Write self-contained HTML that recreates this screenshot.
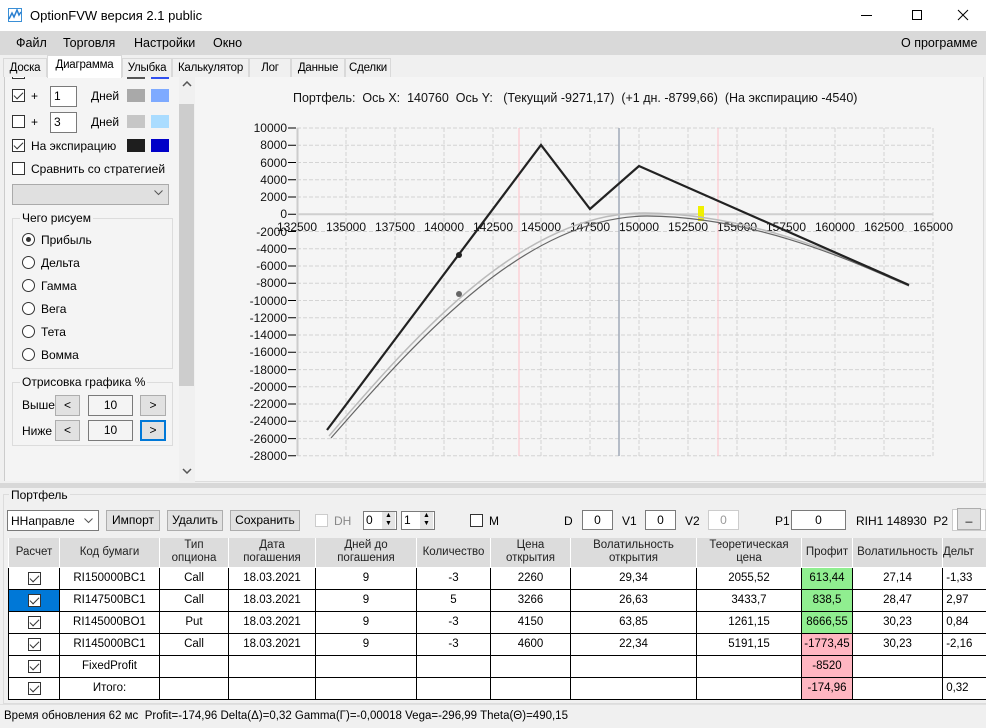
<!DOCTYPE html>
<html><head><meta charset="utf-8"><style>
*{box-sizing:border-box;margin:0;padding:0}
body{width:986px;height:728px;overflow:hidden;background:#f0f0f0;font-family:"Liberation Sans",sans-serif;font-size:12px;color:#000;position:relative}
.a{position:absolute;white-space:nowrap}
.cb{position:absolute;width:13px;height:13px;border:1px solid #333;background:#fff}
.cb.c::after{content:"";position:absolute;left:3px;top:0px;width:4px;height:8px;border:solid #333;border-width:0 1.5px 1.5px 0;transform:rotate(45deg)}
.rb{position:absolute;width:13px;height:13px;border:1px solid #333;border-radius:50%;background:#fff}
.rb.c::after{content:"";position:absolute;left:3px;top:3px;width:5px;height:5px;border-radius:50%;background:#333}
.tb{position:absolute;border:1px solid #7a7a7a;background:#fff;text-align:center;line-height:18px}
.bt{position:absolute;border:1px solid #adadad;background:#e1e1e1;text-align:center;line-height:19px}
.tab{position:absolute;z-index:3;top:58px;height:19px;border:1px solid #d9d9d9;border-bottom:none;background:#f0f0f0;text-align:center;line-height:18px;font-size:11.5px;letter-spacing:-0.2px}
table{border-collapse:collapse;position:absolute;left:8px;top:538px;table-layout:fixed;width:984px;font-size:11.5px}
td{border:1px solid #000;text-align:center;height:22px;background:#fff;overflow:hidden;white-space:nowrap}
th{background:#dcdcdc;font-weight:normal;border:1px solid #fff;border-top:none;height:29px;line-height:13px;color:#222;font-size:11.5px;overflow:hidden;white-space:nowrap}
.g{background:#90ee90}.p{background:#ffb6c1}
</style></head><body>
<!-- title bar -->
<div class="a" style="left:0;top:0;width:986px;height:31px;background:#fff"></div>
<svg class="a" style="left:8px;top:8px" width="14" height="14" viewBox="0 0 14 14"><rect x="0.5" y="0.5" width="13" height="13" fill="#fff" stroke="#3a8fd6"/><path d="M1 11 L4 5 L6 9 L9 2 L11 7 L13 4" stroke="#2a7fd0" stroke-width="1.5" fill="none"/></svg>
<div class="a" style="left:30px;top:8px;font-size:13px">OptionFVW версия 2.1 public</div>
<div class="a" style="left:861px;top:15px;width:11px;height:1px;background:#000"></div>
<div class="a" style="left:912px;top:10px;width:10px;height:10px;border:1px solid #000"></div>
<svg class="a" style="left:957px;top:9px" width="12" height="12"><path d="M1 1L11 11M11 1L1 11" stroke="#000" stroke-width="1"/></svg>
<!-- menu -->
<div class="a" style="left:0;top:31px;width:986px;height:24px;background:#d9d9d9"></div>
<div class="a" style="left:16px;top:36px;font-size:12.5px">Файл</div>
<div class="a" style="left:63px;top:36px;font-size:12.5px">Торговля</div>
<div class="a" style="left:134px;top:36px;font-size:12.5px">Настройки</div>
<div class="a" style="left:213px;top:36px;font-size:12.5px">Окно</div>
<div class="a" style="left:901px;top:36px;font-size:12.5px">О программе</div>
<!-- tabs -->
<div class="a" style="left:0;top:55px;width:986px;height:22px;background:#f0f0f0;z-index:2"></div>
<div class="tab" style="left:3px;width:44px">Доска</div>
<div class="tab" style="left:47px;top:55px;height:23px;width:75px;background:#fff;line-height:18px">Диаграмма</div>
<div class="tab" style="left:122px;width:50px">Улыбка</div>
<div class="tab" style="left:172px;width:77px">Калькулятор</div>
<div class="tab" style="left:249px;width:42px">Лог</div>
<div class="tab" style="left:291px;width:54px">Данные</div>
<div class="tab" style="left:345px;width:46px">Сделки</div>
<!-- left panel -->
<div class="a" style="left:4px;top:77px;width:191px;height:404px;border-left:1px solid #ccc;background:#f4f4f4"></div>
<div class="cb" style="left:12px;top:66px"></div>
<div class="a" style="left:127px;top:77px;width:18px;height:2px;background:#555"></div>
<div class="a" style="left:151px;top:77px;width:18px;height:2px;background:#3050f0"></div>
<div class="cb c" style="left:12px;top:89px"></div><div class="a" style="left:31px;top:89px">+</div>
<div class="tb" style="left:50px;top:86px;width:27px;height:21px;text-align:left;padding-left:3px">1</div>
<div class="a" style="left:91px;top:89px">Дней</div>
<div class="a" style="left:127px;top:89px;width:18px;height:13px;background:#a9a9a9"></div>
<div class="a" style="left:151px;top:89px;width:18px;height:13px;background:#7eaaff"></div>
<div class="cb" style="left:12px;top:115px"></div><div class="a" style="left:31px;top:115px">+</div>
<div class="tb" style="left:50px;top:112px;width:27px;height:21px;text-align:left;padding-left:3px">3</div>
<div class="a" style="left:91px;top:115px">Дней</div>
<div class="a" style="left:127px;top:115px;width:18px;height:13px;background:#c6c6c6"></div>
<div class="a" style="left:151px;top:115px;width:18px;height:13px;background:#aadcff"></div>
<div class="cb c" style="left:12px;top:139px"></div><div class="a" style="left:31px;top:139px">На экспирацию</div>
<div class="a" style="left:127px;top:139px;width:18px;height:13px;background:#1e1e1e"></div>
<div class="a" style="left:151px;top:139px;width:18px;height:13px;background:#0000c8"></div>
<div class="cb" style="left:12px;top:162px"></div><div class="a" style="left:31px;top:162px">Сравнить со стратегией</div>
<div class="a" style="left:12px;top:184px;width:157px;height:21px;background:#e0e0e0;border:1px solid #aaa"></div>
<svg class="a" style="left:154px;top:190px" width="9" height="6"><path d="M0.5 0.5L4.5 4.5L8.5 0.5" stroke="#555" fill="none"/></svg>
<div class="a" style="left:12px;top:218px;width:161px;height:151px;border:1px solid #dcdcdc"></div>
<div class="a" style="left:20px;top:211px;background:#f4f4f4;padding:0 2px">Чего рисуем</div>
<div class="rb c" style="left:22px;top:233px"></div><div class="a" style="left:41px;top:233px">Прибыль</div>
<div class="rb" style="left:22px;top:256px"></div><div class="a" style="left:41px;top:256px">Дельта</div>
<div class="rb" style="left:22px;top:279px"></div><div class="a" style="left:41px;top:279px">Гамма</div>
<div class="rb" style="left:22px;top:302px"></div><div class="a" style="left:41px;top:302px">Вега</div>
<div class="rb" style="left:22px;top:325px"></div><div class="a" style="left:41px;top:325px">Тета</div>
<div class="rb" style="left:22px;top:348px"></div><div class="a" style="left:41px;top:348px">Вомма</div>
<div class="a" style="left:12px;top:382px;width:161px;height:64px;border:1px solid #dcdcdc"></div>
<div class="a" style="left:20px;top:375px;background:#f4f4f4;padding:0 2px">Отрисовка графика %</div>
<div class="a" style="left:22px;top:398px">Выше</div>
<div class="bt" style="left:55px;top:395px;width:25px;height:21px">&lt;</div>
<div class="tb" style="left:88px;top:395px;width:45px;height:21px;background:#f4f4f4">10</div>
<div class="bt" style="left:140px;top:395px;width:26px;height:21px">&gt;</div>
<div class="a" style="left:22px;top:424px">Ниже</div>
<div class="bt" style="left:55px;top:420px;width:25px;height:21px">&lt;</div>
<div class="tb" style="left:88px;top:420px;width:45px;height:21px;background:#f4f4f4">10</div>
<div class="bt" style="left:140px;top:420px;width:26px;height:21px;border:2px solid #0078d7;line-height:17px">&gt;</div>
<!-- scrollbar -->
<div class="a" style="left:179px;top:77px;width:16px;height:404px;background:#f0f0f0"></div>
<div class="a" style="left:179px;top:104px;width:15px;height:282px;background:#cdcdcd"></div>
<svg class="a" style="left:182px;top:81px" width="10" height="6"><path d="M1 5L5 1L9 5" stroke="#555" stroke-width="1.5" fill="none"/></svg>
<svg class="a" style="left:182px;top:468px" width="10" height="6"><path d="M1 1L5 5L9 1" stroke="#555" stroke-width="1.5" fill="none"/></svg>
<!-- chart -->
<div class="a" style="left:195px;top:75px;width:789px;height:407px;background:#f5f5f5;border:1px solid #ddd;border-left:none"></div>
<div class="a" style="left:293px;top:91px;font-size:12.5px;color:#111">Портфель:&nbsp; Ось X:&nbsp; 140760&nbsp; Ось Y:&nbsp;&nbsp; (Текущий -9271,17)&nbsp;&nbsp;(+1 дн. -8799,66)&nbsp;&nbsp;(На экспирацию -4540)</div>
<svg class="a" style="left:195px;top:77px" width="789" height="404" viewBox="195 77 789 404" font-family="Liberation Sans" font-size="12">
<g stroke="#d4d4d4" stroke-dasharray="4,2" stroke-width="1">
<path d="M346 128V456M395 128V456M444 128V456M493 128V456M541 128V456M590 128V456M639 128V456M688 128V456M737 128V456M786 128V456M835 128V456M884 128V456M933 128V456"/>
<path d="M297 128H933M297 145.3H933M297 162.5H933M297 179.8H933M297 197H933M297 231.5H933M297 248.8H933M297 266H933M297 283.3H933M297 300.5H933M297 317.8H933M297 335H933M297 352.3H933M297 369.6H933M297 386.8H933M297 404H933M297 421.3H933M297 438.6H933M297 455.8H933"/>
</g>
<path d="M297.5 128V456" stroke="#ccc" stroke-width="2"/>
<path d="M297 214.3H933" stroke="#cfcfcf" stroke-width="2"/>
<g stroke="#000"><path d="M288 128h8M288 145.3h8M288 162.5h8M288 179.8h8M288 197h8M288 214.3h8M288 231.5h8M288 248.8h8M288 266h8M288 283.3h8M288 300.5h8M288 317.8h8M288 335h8M288 352.3h8M288 369.6h8M288 386.8h8M288 404h8M288 421.3h8M288 438.6h8M288 455.8h8"/></g>
<g text-anchor="end" fill="#111">
<text x="287" y="132">10000</text><text x="287" y="149">8000</text><text x="287" y="167">6000</text><text x="287" y="184">4000</text><text x="287" y="201">2000</text><text x="287" y="218">0</text><text x="287" y="236">-2000</text><text x="287" y="253">-4000</text><text x="287" y="270">-6000</text><text x="287" y="287">-8000</text><text x="287" y="305">-10000</text><text x="287" y="322">-12000</text><text x="287" y="339">-14000</text><text x="287" y="356">-16000</text><text x="287" y="374">-18000</text><text x="287" y="391">-20000</text><text x="287" y="408">-22000</text><text x="287" y="425">-24000</text><text x="287" y="443">-26000</text><text x="287" y="460">-28000</text>
</g>
<g text-anchor="middle" fill="#111">
<text x="297" y="231">132500</text><text x="346" y="231">135000</text><text x="395" y="231">137500</text><text x="444" y="231">140000</text><text x="493" y="231">142500</text><text x="541" y="231">145000</text><text x="590" y="231">147500</text><text x="639" y="231">150000</text><text x="688" y="231">152500</text><text x="737" y="231">155000</text><text x="786" y="231">157500</text><text x="835" y="231">160000</text><text x="884" y="231">162500</text><text x="933" y="231">165000</text>
</g>
<path d="M519 128V456M718 128V456" stroke="#ffc0c8" stroke-width="1"/>
<path d="M619 128V456" stroke="#a0aab8" stroke-width="1.5"/>
<rect x="698" y="206" width="6" height="15" fill="#f0f000"/>
<path d="M329 436 C 420 330, 525 212, 645 213 C 760 214, 860 264, 909 285" stroke="#bbb" stroke-width="1.5" fill="none"/>
<path d="M331 438 C 422 334, 527 217, 647 216 C 762 217, 862 266, 909 286" stroke="#666" stroke-width="1.2" fill="none"/>
<path d="M327 430 L541 145 L590 209 L639 166 L909 285" stroke="#222" stroke-width="2.2" fill="none"/>
<circle cx="459" cy="255" r="3" fill="#222"/>
<circle cx="459" cy="294" r="3" fill="#666"/>
</svg>
<!-- separator -->
<div class="a" style="left:0;top:483px;width:986px;height:5px;background:#d8d8d8"></div>
<!-- portfolio -->
<div class="a" style="left:3px;top:494px;width:983px;height:210px;border:1px solid #dcdcdc;border-right:none"></div>
<div class="a" style="left:9px;top:488px;background:#f0f0f0;padding:0 2px">Портфель</div>
<div class="a" style="left:7px;top:510px;width:92px;height:21px;background:#fff;border:1px solid #7a7a7a;padding:3px 3px">ННаправле</div>
<svg class="a" style="left:84px;top:518px" width="9" height="6"><path d="M0.5 0.5L4.5 4.5L8.5 0.5" stroke="#555" fill="none"/></svg>
<div class="bt" style="left:106px;top:510px;width:54px;height:21px">Импорт</div>
<div class="bt" style="left:167px;top:510px;width:56px;height:21px">Удалить</div>
<div class="bt" style="left:230px;top:510px;width:70px;height:21px">Сохранить</div>
<div class="cb" style="left:315px;top:514px;border-color:#ccc"></div><div class="a" style="left:334px;top:514px;color:#888">DH</div>
<div class="tb" style="left:363px;top:511px;width:34px;height:19px;text-align:left;padding-left:2px;line-height:16px">0</div>
<div class="a" style="left:382px;top:512px;width:13px;height:17px;background:#e5e5e5;font-size:7px;line-height:8px;text-align:center">▲<br>▼</div>
<div class="tb" style="left:401px;top:511px;width:34px;height:19px;text-align:left;padding-left:2px;line-height:16px">1</div>
<div class="a" style="left:420px;top:512px;width:13px;height:17px;background:#e5e5e5;font-size:7px;line-height:8px;text-align:center">▲<br>▼</div>
<div class="cb" style="left:470px;top:514px"></div><div class="a" style="left:489px;top:514px">M</div>
<div class="a" style="left:564px;top:514px">D</div>
<div class="tb" style="left:582px;top:510px;width:31px;height:20px">0</div>
<div class="a" style="left:622px;top:514px">V1</div>
<div class="tb" style="left:645px;top:510px;width:31px;height:20px">0</div>
<div class="a" style="left:685px;top:514px">V2</div>
<div class="tb" style="left:708px;top:510px;width:31px;height:20px;border-color:#ccc;color:#999">0</div>
<div class="a" style="left:775px;top:514px">P1</div>
<div class="tb" style="left:791px;top:510px;width:55px;height:20px">0</div>
<div class="a" style="left:856px;top:514px">RIH1 148930&nbsp; P2</div>
<div class="a" style="left:952px;top:509px;width:34px;height:22px;border:1px solid #ccc;background:#fff"></div>
<div class="bt" style="left:957px;top:508px;width:24px;height:22px;line-height:15px">_</div>
<table>
<colgroup><col style="width:51px"><col style="width:100px"><col style="width:69px"><col style="width:87px"><col style="width:101px"><col style="width:74px"><col style="width:80px"><col style="width:126px"><col style="width:105px"><col style="width:51px"><col style="width:90px"><col style="width:50px"></colgroup>
<tr><th>Расчет</th><th>Код бумаги</th><th>Тип<br>опциона</th><th>Дата<br>погашения</th><th>Дней до<br>погашения</th><th>Количество</th><th>Цена<br>открытия</th><th>Волатильность<br>открытия</th><th>Теоретическая<br>цена</th><th>Профит</th><th>Волатильность</th><th style="text-align:left">Дельт</th></tr>
<tr><td><span class="cb c" style="position:relative;display:inline-block;vertical-align:middle"></span></td><td>RI150000BC1</td><td>Call</td><td>18.03.2021</td><td>9</td><td>-3</td><td>2260</td><td>29,34</td><td>2055,52</td><td class="g">613,44</td><td>27,14</td><td style="text-align:left">&nbsp;-1,33</td></tr>
<tr><td style="background:#0078d7"><span class="cb c" style="position:relative;display:inline-block;vertical-align:middle"></span></td><td>RI147500BC1</td><td>Call</td><td>18.03.2021</td><td>9</td><td>5</td><td>3266</td><td>26,63</td><td>3433,7</td><td class="g">838,5</td><td>28,47</td><td style="text-align:left">&nbsp;2,97</td></tr>
<tr><td><span class="cb c" style="position:relative;display:inline-block;vertical-align:middle"></span></td><td>RI145000BO1</td><td>Put</td><td>18.03.2021</td><td>9</td><td>-3</td><td>4150</td><td>63,85</td><td>1261,15</td><td class="g">8666,55</td><td>30,23</td><td style="text-align:left">&nbsp;0,84</td></tr>
<tr><td><span class="cb c" style="position:relative;display:inline-block;vertical-align:middle"></span></td><td>RI145000BC1</td><td>Call</td><td>18.03.2021</td><td>9</td><td>-3</td><td>4600</td><td>22,34</td><td>5191,15</td><td class="p">-1773,45</td><td>30,23</td><td style="text-align:left">&nbsp;-2,16</td></tr>
<tr><td><span class="cb c" style="position:relative;display:inline-block;vertical-align:middle"></span></td><td>FixedProfit</td><td></td><td></td><td></td><td></td><td></td><td></td><td></td><td class="p">-8520</td><td></td><td></td></tr>
<tr><td><span class="cb c" style="position:relative;display:inline-block;vertical-align:middle"></span></td><td>Итого:</td><td></td><td></td><td></td><td></td><td></td><td></td><td></td><td class="p">-174,96</td><td></td><td style="text-align:left">&nbsp;0,32</td></tr>
</table>
<!-- status -->
<div class="a" style="left:0;top:704px;width:986px;height:24px;background:#f0f0f0;border-top:1px solid #e0e0e0"></div>
<div class="a" style="left:4px;top:710px;font-size:11.5px">Время обновления 62 мс&nbsp; Profit=-174,96 Delta(Δ)=0,32 Gamma(Γ)=-0,00018 Vega=-296,99 Theta(Θ)=490,15</div>
</body></html>
